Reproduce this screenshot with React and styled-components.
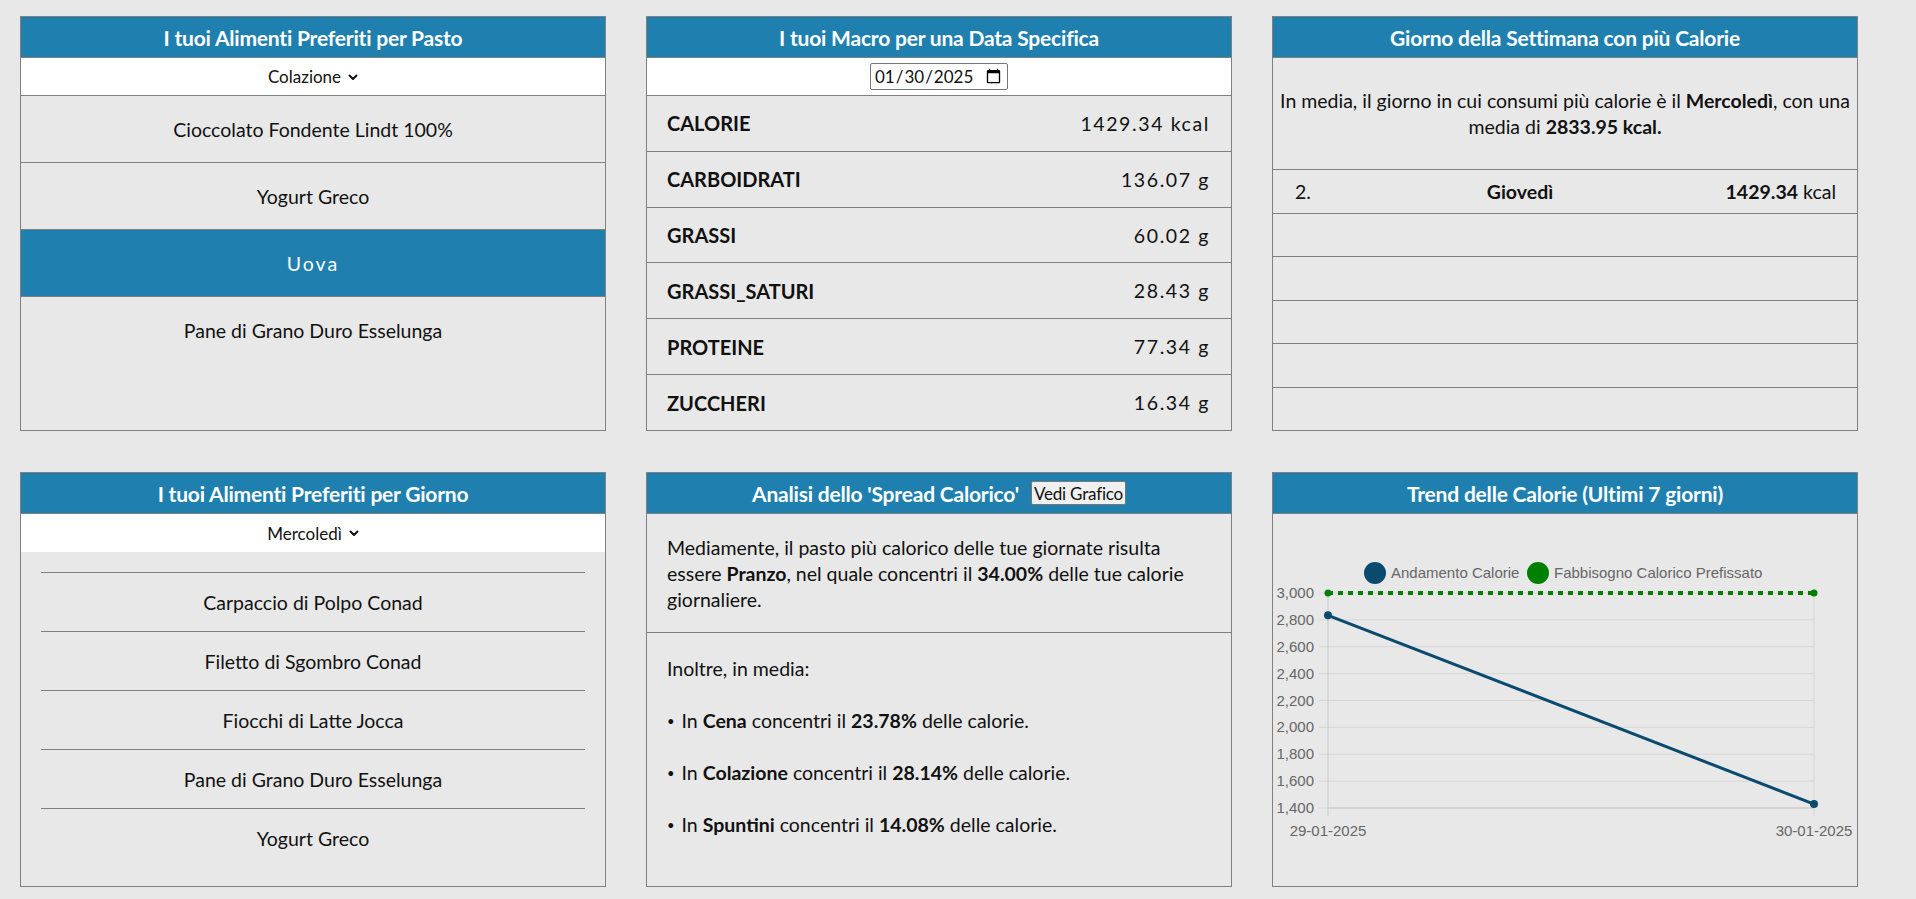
import React from "react";
import styled, { createGlobalStyle } from "styled-components";

const GlobalStyle = createGlobalStyle`
  html, body { margin: 0; padding: 0; }
  body {
    background: #e8e8e8;
    font-family: "Lato", "Noto Sans", sans-serif;
    color: #111;
  }
  * { box-sizing: border-box; }
`;

const Page = styled.div`
  display: grid;
  grid-template-columns: repeat(3, 586px);
  column-gap: 40px;
  row-gap: 41px;
  padding: 16px 20px 381px 20px;
`;

const Card = styled.section`
  height: 415px;
  border: 1px solid #808080;
  background: #e8e8e8;
  display: flex;
  flex-direction: column;
  overflow: hidden;
`;

const Header = styled.header`
  flex: 0 0 41px;
  background: #1f80b0;
  color: #fff;
  font-weight: 700;
  font-size: 21px;
  display: flex;
  align-items: center;
  justify-content: center;
  gap: 12px;
  border-bottom: 1px solid #808080;
  letter-spacing: -0.2px;
`;

const HeaderButton = styled.button`
  font-family: inherit;
  font-size: 17px;
  font-weight: 400;
  color: #111;
  background: #f0f0f0;
  border: 1px solid #767676;
  border-radius: 2px;
  padding: 0 2px;
  height: 24px;
  letter-spacing: -0.2px;
`;

const SelectBar = styled.div`
  flex: 0 0 38px;
  background: #fff;
  display: flex;
  align-items: center;
  justify-content: center;
  border-bottom: ${(p) => (p.$bordered ? "1px solid #808080" : "none")};
`;

const SelectWrap = styled.label`
  display: inline-flex;
  align-items: center;
  gap: 5px;
  color: #111;
`;

const NativeSelect = styled.select`
  appearance: none;
  -webkit-appearance: none;
  border: none;
  background: transparent;
  font-family: inherit;
  font-size: 17px;
  color: #111;
  padding: 0;
  outline: none;
  text-align: center;
`;

const DateInput = styled.input`
  font-family: inherit;
  font-size: 17px;
  height: 27px;
  width: 138px;
  border: 1px solid #767676;
  border-radius: 2px;
  padding: 0 3px;
  background: #fff;
  color: #111;
`;

const FoodItem = styled.div`
  flex: 0 0 67px;
  display: flex;
  align-items: center;
  justify-content: center;
  font-size: 19.5px;
  background: ${(p) => (p.$active ? "#1f80b0" : "transparent")};
  color: ${(p) => (p.$active ? "#fff" : "#111")};
  letter-spacing: ${(p) => (p.$active ? "2px" : "normal")};
  border-bottom: ${(p) => (p.$last ? "none" : "1px solid #808080")};
`;

const RowList = styled.div`
  flex: 1;
  display: flex;
  flex-direction: column;
`;

const MacroRow = styled.div`
  flex: 1;
  display: flex;
  align-items: center;
  justify-content: space-between;
  padding: 0 21px 0 20px;
  border-bottom: ${(p) => (p.$last ? "none" : "1px solid #808080")};
  font-size: 19.5px;
`;

const MacroLabel = styled.span`
  font-weight: 700;
  font-size: 20px;
`;

const MacroValue = styled.span`
  letter-spacing: 1.6px;
`;

const Summary = styled.div`
  flex: 0 0 112px;
  display: flex;
  align-items: center;
  justify-content: center;
  text-align: center;
  padding: 0 2px;
  font-size: 19.5px;
  line-height: 26px;
  border-bottom: 1px solid #808080;
`;

const RankRow = styled.div`
  flex: 1;
  display: grid;
  grid-template-columns: 100px 250px 1fr;
  align-items: center;
  padding: 0 21px 0 22px;
  font-size: 19.5px;
  border-bottom: ${(p) => (p.$last ? "none" : "1px solid #808080")};
`;

const RankDay = styled.span`
  text-align: center;
  font-weight: 700;
`;

const RankValue = styled.span`
  text-align: right;
`;

const DayList = styled.div`
  flex: 1;
  padding: 20px 20px 0 20px;
  display: flex;
  flex-direction: column;
`;

const DayItem = styled.div`
  flex: 0 0 59px;
  border-top: 1px solid #808080;
  display: flex;
  align-items: center;
  justify-content: center;
  font-size: 19.5px;
`;

const TextBlock = styled.div`
  padding: ${(p) => p.$pad};
  font-size: 19.5px;
  line-height: 26px;
  border-bottom: ${(p) => (p.$bordered ? "1px solid #808080" : "none")};
  display: flex;
  flex-direction: column;
  gap: ${(p) => p.$gap || "0"};
  flex: ${(p) => (p.$grow ? 1 : "0 0 auto")};
`;

const Line = styled.p`
  margin: 0;
`;

const Bullet = styled.span`
  font-size: 13px;
  vertical-align: 2px;
  margin-right: 2px;
`;

const ChartBody = styled.div`
  flex: 1;
  display: block;
`;

const Chevron = () => (
  <svg width="12" height="12" viewBox="0 0 24 24" fill="none" stroke="#111" strokeWidth="4" strokeLinecap="round" strokeLinejoin="round">
    <polyline points="5 9 12 16 19 9" />
  </svg>
);

function Select({ value, options }) {
  return (
    <SelectWrap>
      <NativeSelect defaultValue={value}>
        {options.map((o) => (
          <option key={o} value={o}>{o}</option>
        ))}
      </NativeSelect>
      <Chevron />
    </SelectWrap>
  );
}

const chartFont = '"Liberation Sans", Arial, sans-serif';

function TrendChart() {
  const x0 = 55;
  const x1 = 541;
  const yTop = 79;
  const step = 26.875;
  const yOf = (v) => 294 - ((v - 1400) / 200) * step;
  const ticks = [3000, 2800, 2600, 2400, 2200, 2000, 1800, 1600, 1400];
  const p1 = yOf(2833.95);
  const p2 = yOf(1429.34);
  return (
    <svg width="584" height="372" viewBox="0 0 584 372">
      <g fontFamily={chartFont} fontSize="15" fill="#666">
        <circle cx="102" cy="59" r="11" fill="#0a4a6e" />
        <text x="118" y="64">Andamento Calorie</text>
        <circle cx="265" cy="59" r="11" fill="#008000" />
        <text x="281" y="64">Fabbisogno Calorico Prefissato</text>
      </g>
      {ticks.map((t) => (
        <g key={t}>
          <line x1="46" x2={x1} y1={yOf(t)} y2={yOf(t)} stroke="#d6d6d6" strokeWidth="1" />
          <text x="41" y={yOf(t) + 5} textAnchor="end" fontFamily={chartFont} fontSize="15" fill="#666">
            {t.toLocaleString("en-US")}
          </text>
        </g>
      ))}
      <line x1={x0} x2={x0} y1={yTop} y2="302" stroke="#c8c8c8" strokeWidth="1" />
      <line x1={x1} x2={x1} y1={yTop} y2="302" stroke="#d6d6d6" strokeWidth="1" />
      <line x1={x0} x2={x1} y1="294" y2="294" stroke="#c8c8c8" strokeWidth="1" />
      <text x={x0} y="322" textAnchor="middle" fontFamily={chartFont} fontSize="15" fill="#666">29-01-2025</text>
      <text x={x1} y="322" textAnchor="middle" fontFamily={chartFont} fontSize="15" fill="#666">30-01-2025</text>
      <line x1={x0} x2={x1} y1={yTop} y2={yTop} stroke="#008000" strokeWidth="4" strokeDasharray="5 5" />
      <circle cx={x0} cy={yTop} r="3.5" fill="#008000" />
      <circle cx={x1} cy={yTop} r="3.5" fill="#008000" />
      <line x1={x0} x2={x1} y1={p1} y2={p2} stroke="#0a4a6e" strokeWidth="3" />
      <circle cx={x0} cy={p1} r="4" fill="#0a4a6e" />
      <circle cx={x1} cy={p2} r="4" fill="#0a4a6e" />
    </svg>
  );
}

const mealFoods = [
  "Cioccolato Fondente Lindt 100%",
  "Yogurt Greco",
  "Uova",
  "Pane di Grano Duro Esselunga",
];

const macros = [
  ["CALORIE", "1429.34 kcal"],
  ["CARBOIDRATI", "136.07 g"],
  ["GRASSI", "60.02 g"],
  ["GRASSI_SATURI", "28.43 g"],
  ["PROTEINE", "77.34 g"],
  ["ZUCCHERI", "16.34 g"],
];

const dayFoods = [
  "Carpaccio di Polpo Conad",
  "Filetto di Sgombro Conad",
  "Fiocchi di Latte Jocca",
  "Pane di Grano Duro Esselunga",
  "Yogurt Greco",
];

const spread = [
  ["Cena", "23.78%"],
  ["Colazione", "28.14%"],
  ["Spuntini", "14.08%"],
];

export default function App() {
  return (
    <>
      <GlobalStyle />
      <Page>
        <Card>
          <Header>I tuoi Alimenti Preferiti per Pasto</Header>
          <SelectBar $bordered>
            <Select value="Colazione" options={["Colazione", "Pranzo", "Cena", "Spuntini"]} />
          </SelectBar>
          {mealFoods.map((f, i) => (
            <FoodItem key={f} $active={f === "Uova"} $last={i === mealFoods.length - 1}>
              {f}
            </FoodItem>
          ))}
        </Card>

        <Card>
          <Header>I tuoi Macro per una Data Specifica</Header>
          <SelectBar $bordered>
            <DateInput type="date" defaultValue="2025-01-30" />
          </SelectBar>
          <RowList>
            {macros.map(([k, v], i) => (
              <MacroRow key={k} $last={i === macros.length - 1}>
                <MacroLabel>{k}</MacroLabel>
                <MacroValue>{v}</MacroValue>
              </MacroRow>
            ))}
          </RowList>
        </Card>

        <Card>
          <Header>Giorno della Settimana con più Calorie</Header>
          <Summary>
            <Line>
              In media, il giorno in cui consumi più calorie è il <b>Mercoledì</b>, con una media di{" "}
              <b>2833.95 kcal.</b>
            </Line>
          </Summary>
          <RowList>
            <RankRow>
              <span>2.</span>
              <RankDay>Giovedì</RankDay>
              <RankValue>
                <b>1429.34</b> kcal
              </RankValue>
            </RankRow>
            {[0, 1, 2, 3, 4].map((i) => (
              <RankRow key={i} $last={i === 4} />
            ))}
          </RowList>
        </Card>

        <Card>
          <Header>I tuoi Alimenti Preferiti per Giorno</Header>
          <SelectBar>
            <Select
              value="Mercoledì"
              options={["Lunedì", "Martedì", "Mercoledì", "Giovedì", "Venerdì", "Sabato", "Domenica"]}
            />
          </SelectBar>
          <DayList>
            {dayFoods.map((f) => (
              <DayItem key={f}>{f}</DayItem>
            ))}
          </DayList>
        </Card>

        <Card>
          <Header>
            Analisi dello 'Spread Calorico'
            <HeaderButton type="button">Vedi Grafico</HeaderButton>
          </Header>
          <TextBlock $pad="21px 20px 19px 20px" $bordered>
            <Line>
              Mediamente, il pasto più calorico delle tue giornate risulta essere <b>Pranzo</b>, nel quale
              concentri il <b>34.00%</b> delle tue calorie giornaliere.
            </Line>
          </TextBlock>
          <TextBlock $pad="23px 20px 0 20px" $gap="26px" $grow>
            <Line>Inoltre, in media:</Line>
            {spread.map(([meal, pct]) => (
              <Line key={meal}>
                <Bullet>•</Bullet> In <b>{meal}</b> concentri il <b>{pct}</b> delle calorie.
              </Line>
            ))}
          </TextBlock>
        </Card>

        <Card>
          <Header>Trend delle Calorie (Ultimi 7 giorni)</Header>
          <ChartBody>
            <TrendChart />
          </ChartBody>
        </Card>
      </Page>
    </>
  );
}
